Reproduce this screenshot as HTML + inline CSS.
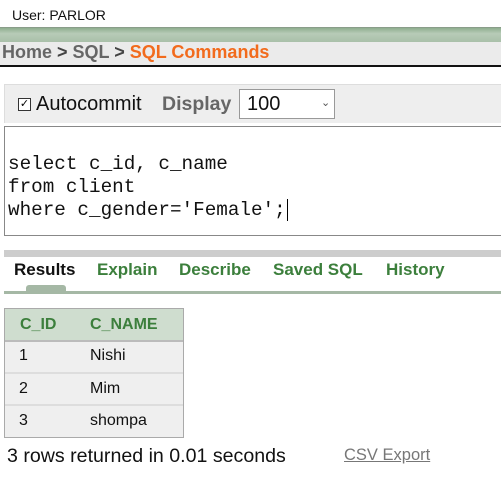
<!DOCTYPE html>
<html><head><style>
body{margin:0;width:501px;height:498px;background:#fff;font-family:"Liberation Sans",Arial,sans-serif;position:relative;overflow:hidden}
.a{position:absolute;white-space:nowrap}
</style></head><body>
<div class="a" style="left:12px;top:7px;font-size:14px;color:#111">User: PARLOR</div>
<div class="a" style="left:0;top:27px;width:501px;height:14px;background:linear-gradient(#8fae8f,#b7cbb7 40%,#a9c0a9);border-top:1px solid #8a9d8a"></div>
<div class="a" style="left:0;top:42px;width:501px;height:23px;background:#ebebeb;border-bottom:2px solid #111"></div>
<div class="a" style="left:2px;top:42px;font-size:18px;font-weight:bold;color:#666">Home <span style="color:#444">&gt;</span> SQL <span style="color:#444">&gt;</span> <span style="color:#f26b1d">SQL Commands</span></div>
<div class="a" style="left:4px;top:84px;width:497px;height:38px;background:#eeeeee;border-top:1px solid #ddd;border-left:1px solid #ddd"></div>
<div class="a" style="left:18px;top:98px;width:11px;height:11px;border:1px solid #333;background:#fff;font-size:11px;line-height:11px;text-align:center">✓</div>
<div class="a" style="left:36px;top:93px;font-size:20px;color:#111">Autocommit</div>
<div class="a" style="left:162px;top:93px;font-size:19.5px;font-weight:bold;color:#666">Display</div>
<div class="a" style="left:239px;top:89px;width:96px;height:30px;background:#fff;border:1px solid #999;box-sizing:border-box"></div>
<div class="a" style="left:247px;top:93px;font-size:20px;color:#111">100</div>
<div class="a" style="left:321px;top:96px;font-size:11px;color:#555">⌄</div>
<div class="a" style="left:4px;top:126px;width:497px;height:110px;border:1px solid #888;box-sizing:border-box;border-right:none"></div>
<div class="a" style="left:8px;top:153px;font-family:'Liberation Mono',monospace;font-size:19.3px;line-height:23px;color:#111">select c_id, c_name<br>from client<br>where c_gender='Female';<span style="border-left:1px solid #000;margin-left:1px"></span></div>
<div class="a" style="left:4px;top:250px;width:497px;height:7px;background:#cdcdcd"></div>
<div class="a" style="left:14px;top:260px;font-size:17px;font-weight:bold;color:#111">Results</div>
<div class="a" style="left:97px;top:260px;font-size:17px;font-weight:bold;color:#3c7f3c">Explain</div>
<div class="a" style="left:179px;top:260px;font-size:17px;font-weight:bold;color:#3c7f3c">Describe</div>
<div class="a" style="left:273px;top:260px;font-size:17px;font-weight:bold;color:#3c7f3c">Saved SQL</div>
<div class="a" style="left:386px;top:260px;font-size:17px;font-weight:bold;color:#3c7f3c">History</div>
<div class="a" style="left:26px;top:285px;width:40px;height:8px;background:#a5b8a5;border-radius:3px 3px 0 0"></div>
<div class="a" style="left:4px;top:291px;width:497px;height:3px;background:#a5b8a5"></div>
<div class="a" style="left:4px;top:308px;width:180px;height:130px;border:1px solid #aaa;box-sizing:border-box;background:#efefef"></div>
<div class="a" style="left:5px;top:309px;width:178px;height:31px;background:#cfddcf;border-bottom:2px solid #bbb"></div>
<div class="a" style="left:20px;top:316px;font-size:16px;font-weight:bold;color:#3c7f3c">C_ID</div>
<div class="a" style="left:90px;top:316px;font-size:16px;font-weight:bold;color:#3c7f3c">C_NAME</div>
<div class="a" style="left:5px;top:372px;width:178px;height:2px;background:#ddd"></div>
<div class="a" style="left:5px;top:404px;width:178px;height:2px;background:#ddd"></div>
<div class="a" style="left:19px;top:347px;font-size:16px;color:#111">1</div>
<div class="a" style="left:90px;top:347px;font-size:16px;color:#111">Nishi</div>
<div class="a" style="left:19px;top:380px;font-size:16px;color:#111">2</div>
<div class="a" style="left:90px;top:380px;font-size:16px;color:#111">Mim</div>
<div class="a" style="left:19px;top:412px;font-size:16px;color:#111">3</div>
<div class="a" style="left:90px;top:412px;font-size:16px;color:#111">shompa</div>
<div class="a" style="left:7px;top:445px;font-size:19.6px;color:#111">3 rows returned in 0.01 seconds</div>
<div class="a" style="left:344px;top:446px;font-size:16.5px;color:#777;text-decoration:underline">CSV Export</div>
</body></html>
